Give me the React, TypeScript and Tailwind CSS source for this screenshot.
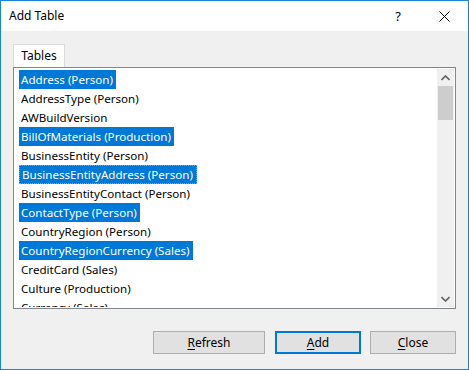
import React from "react";

const items: { name: string; sel?: boolean; focus?: boolean }[] = [
  { name: "Address (Person)", sel: true },
  { name: "AddressType (Person)" },
  { name: "AWBuildVersion" },
  { name: "BillOfMaterials (Production)", sel: true },
  { name: "BusinessEntity (Person)" },
  { name: "BusinessEntityAddress (Person)", sel: true, focus: true },
  { name: "BusinessEntityContact (Person)" },
  { name: "ContactType (Person)", sel: true },
  { name: "CountryRegion (Person)" },
  { name: "CountryRegionCurrency (Sales)", sel: true },
  { name: "CreditCard (Sales)" },
  { name: "Culture (Production)" },
  { name: "Currency (Sales)" },
];

function Btn({ first, rest, w, def }: { first: string; rest: string; w: string; def?: boolean }) {
  return (
    <div
      className={
        "h-[23px] flex items-center justify-center bg-[#e1e1e1] text-[12px] text-black " +
        w +
        (def ? " border-2 border-[#0078d7]" : " border border-[#adadad]")
      }
    >
      <span>
        <span className="underline underline-offset-2">{first}</span>
        {rest}
      </span>
    </div>
  );
}

export default function App() {
  return (
    <div
      className="w-[469px] h-[370px] border border-[#1883d7] flex flex-col bg-[#f0f0f0] overflow-hidden"
      style={{ fontFamily: '"Noto Sans", "Open Sans", sans-serif' }}
    >
      <div className="h-[30px] bg-white flex items-center pl-[8px] shrink-0">
        <span className="text-[12px] text-black flex-1 leading-none">Add Table</span>
        <span className="text-[13px] text-black leading-none mr-[38px]">?</span>
        <svg width="11" height="11" viewBox="0 0 11 11" className="mr-[18px]">
          <path d="M0.5 0.5 L10.5 10.5 M10.5 0.5 L0.5 10.5" stroke="#000" strokeWidth="1" />
        </svg>
      </div>
      <div className="flex-1 flex flex-col px-[12px] pt-[13px]">
        <div className="w-[52px] h-[23px] bg-white border border-b-0 border-[#d9d9d9] flex items-center justify-center text-[12px] text-black">
          Tables
        </div>
        <div className="h-[242px] border border-[#828790] bg-white flex p-[1px]">
          <div className="flex-1 flex flex-col pt-[1px] pl-[4px] overflow-hidden">
            {items.map((it) => (
              <div key={it.name} className="h-[19px] shrink-0 flex">
                <div
                  className={
                    "h-[19px] flex items-center pl-[2px] pr-[3px] text-[11.6px] whitespace-nowrap " +
                    (it.sel ? "bg-[#0078d7] text-white " : "text-black ") +
                    (it.focus ? "border border-dotted border-[#ff8728] pl-[1px] pr-[2px]" : "")
                  }
                >
                  {it.name}
                </div>
              </div>
            ))}
          </div>
          <div className="w-[17px] bg-[#f0f0f0] flex flex-col items-center">
            <div className="h-[17px] flex items-center justify-center">
              <svg width="9" height="6" viewBox="0 0 9 6">
                <path d="M0.5 5 L4.5 1 L8.5 5" stroke="#606060" strokeWidth="1.6" fill="none" />
              </svg>
            </div>
            <div className="w-[15px] h-[34px] bg-[#cdcdcd]" />
            <div className="flex-1" />
            <div className="h-[17px] flex items-center justify-center">
              <svg width="9" height="6" viewBox="0 0 9 6">
                <path d="M0.5 1 L4.5 5 L8.5 1" stroke="#606060" strokeWidth="1.6" fill="none" />
              </svg>
            </div>
          </div>
        </div>
        <div className="flex justify-end mt-[22px]">
          <Btn first="R" rest="efresh" w="w-[112px]" />
          <div className="w-[10px]" />
          <Btn first="A" rest="dd" w="w-[86px]" def />
          <div className="w-[9px]" />
          <Btn first="C" rest="lose" w="w-[86px]" />
        </div>
      </div>
    </div>
  );
}
